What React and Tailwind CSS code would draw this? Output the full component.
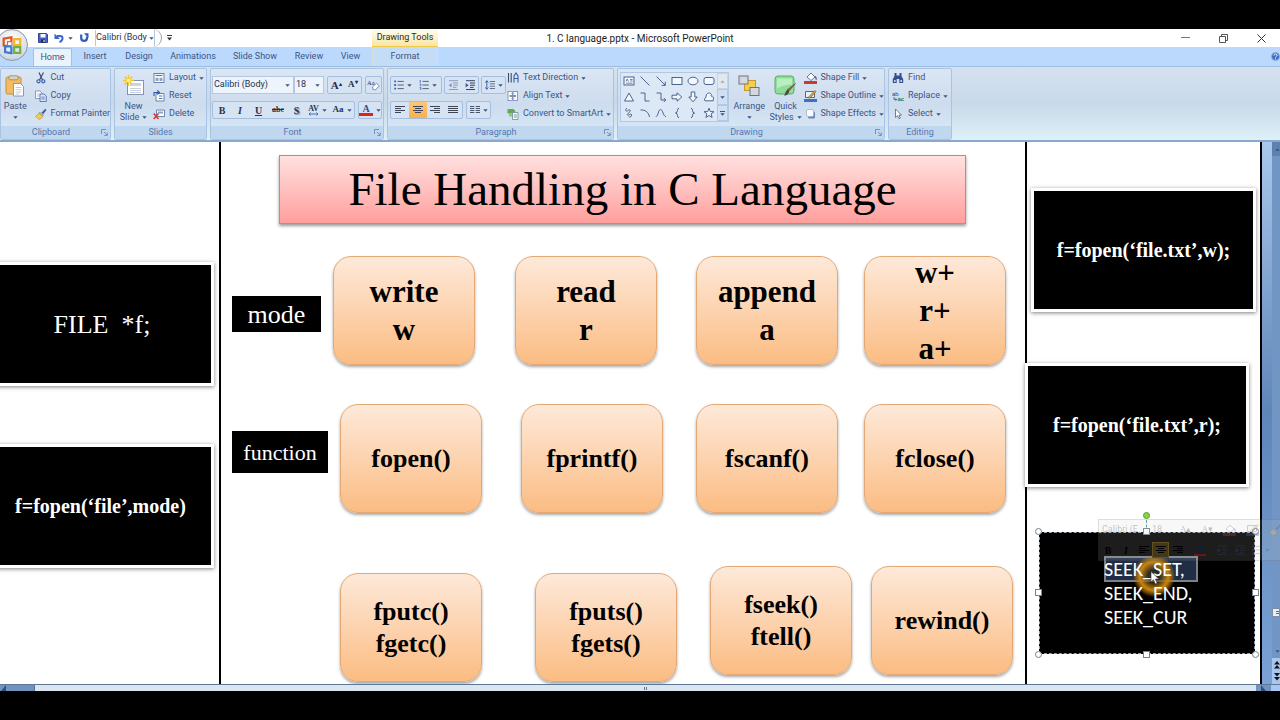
import React from "react";

const INK = "#3b5584";

function Caret({ className = "" }) {
  return (
    <svg className={`h-[3px] w-[5px] shrink-0 ${className}`} viewBox="0 0 5 3" aria-hidden="true">
      <path d="M0.3 0.3h4.4L2.5 2.8z" fill={INK} />
    </svg>
  );
}

function Svg({ w = 12, h = 12, className = "", children }) {
  return (
    <svg width={w} height={h} viewBox={`0 0 ${w} ${h}`} className={`shrink-0 ${className}`} fill="none" aria-hidden="true">
      {children}
    </svg>
  );
}

/* ---------- icons ---------- */

const Save = () => (
  <Svg w={10} h={10}>
    <path d="M0.5 0.5h8l1 1v8h-9z" fill="#4d5fc0" stroke="#35449a" />
    <path d="M2.5 1h5v3.5h-5z" fill="#f4f6ff" />
    <path d="M3 6.5h4v3h-4z" fill="#20295e" />
    <path d="M5.5 7h1v2h-1z" fill="#fff" />
  </Svg>
);
const Undo = () => (
  <Svg w={10} h={10}>
    <path d="M3 3h3.2q2.300 0 2.300 2.300Q8.500 8 5.500 9" stroke="#3e63cf" strokeWidth="2" />
    <path d="M0.500 0.500v5.500H6z" fill="#3e63cf" />
  </Svg>
);
const Redo = () => (
  <Svg w={10} h={10}>
    <path d="M2.200 1.500v3.500a2.900 2.900 0 0 0 5.800 0V3.500" stroke="#2e5cc0" strokeWidth="2.200" />
    <path d="M4.800 0.300h4.700v4.700z" fill="#2e5cc0" />
  </Svg>
);
const PasteIcon = () => (
  <Svg w={20} h={22}>
    <rect x="1" y="2" width="15" height="17" rx="1.5" fill="#f2bd62" stroke="#c98c35" />
    <rect x="4" y="0.8" width="9" height="4" rx="1" fill="#d8d3c4" stroke="#8c8672" strokeWidth="0.8" />
    <path d="M8.5 8.5h7l3 3v9.5h-10z" fill="#fff" stroke="#7f8fb3" strokeWidth="0.9" />
    <path d="M10.5 12.5h6M10.5 14.7h6M10.5 17h6M10.5 19h4" stroke="#a9b8d6" strokeWidth="0.7" />
  </Svg>
);
const CutIcon = () => (
  <Svg>
    <path d="M4 0.5 7.5 8M8.5 0.5 4.5 8" stroke="#3b4a7a" strokeWidth="1.2" />
    <circle cx="3.5" cy="9.3" r="1.6" stroke="#3659a8" strokeWidth="1.1" />
    <circle cx="8.3" cy="9.3" r="1.6" stroke="#3659a8" strokeWidth="1.1" />
  </Svg>
);
const CopyIcon = () => (
  <Svg>
    <path d="M0.5 1h4.5l2 2v5.5h-6.5z" fill="#fff" stroke="#6b86bd" strokeWidth="0.8" />
    <path d="M1.8 4h3M1.8 6h3" stroke="#86a0d0" strokeWidth="0.7" />
    <path d="M5 4h4l2.3 2v5.5H5z" fill="#dbe6fa" stroke="#46639f" strokeWidth="0.8" />
    <path d="M6.3 7.2h3.5M6.3 9h3.5" stroke="#4d6db0" strokeWidth="0.8" />
  </Svg>
);
const PainterIcon = () => (
  <Svg>
    <path d="M6.5 4.8 10.2 0.8l1.3 1.1-3.4 4.3z" fill="#4058a6" />
    <path d="M4.7 4 8.6 7 7.7 8.4 3.8 5.3z" fill="#b9b9b9" stroke="#777" strokeWidth="0.4" />
    <path d="M3.8 5.3 7.7 8.4C7 10.2 5.5 11.3 3.6 11.3 2.7 9.8 1.3 9 0.3 8.6z" fill="#f1cc56" stroke="#a88a2c" strokeWidth="0.5" />
  </Svg>
);
const NewSlideIcon = () => (
  <Svg w={22} h={22}>
    <rect x="4.5" y="5.5" width="16" height="14" fill="#fff" stroke="#8492ad" />
    <rect x="7" y="8" width="11" height="3" fill="#c8d3e6" />
    <path d="M7 13.5h11M7 15.5h11M7 17.5h11" stroke="#b8c3d6" strokeWidth="0.8" />
    <path d="M5.5 0v11M0 5.5h11M1.6 1.6l7.8 7.8M9.4 1.6 1.6 9.4" stroke="#f3c928" strokeWidth="1.4" />
    <circle cx="5.5" cy="5.5" r="1.8" fill="#fff3a0" />
  </Svg>
);
const LayoutIcon = () => (
  <Svg>
    <rect x="1" y="1.5" width="10" height="9" fill="#fff" stroke="#5f779f" strokeWidth="0.9" />
    <path d="M2.5 3.5h7" stroke="#5f779f" strokeWidth="1.2" />
    <path d="M2.5 5.7h3v3.3h-3zM6.5 5.7h3v3.3h-3z" fill="#8ba1c6" />
  </Svg>
);
const ResetIcon = () => (
  <Svg>
    <path d="M3 3.5h8v7.5H3z" fill="#fff" stroke="#5f779f" strokeWidth="0.9" />
    <path d="M6 6h3.5M6 8.5h3.5" stroke="#5f779f" />
    <path d="M1 6V2.5h5M4.3 0.5 6.5 2.5 4.3 4.5" stroke="#2f59b5" strokeWidth="1.1" />
  </Svg>
);
const DeleteIcon = () => (
  <Svg>
    <path d="M3.5 2h8v6.5h-8z" fill="#fff" stroke="#5f779f" strokeWidth="0.9" />
    <path d="M5 3.5h5v2H5z" fill="#8ba1c6" />
    <path d="M0.7 5.5 5.5 11M5.5 5.5 0.7 11" stroke="#dd3b2a" strokeWidth="1.6" />
  </Svg>
);
const ClearIcon = () => (
  <Svg w={13}>
    <text x="0" y="6" fontSize="6.5" fontFamily="Liberation Serif, serif" fill="#222c50">Aa</text>
    <path d="M5.5 8 9.5 4.3l2.8 2.5-4 4.2-2.3-.6z" fill="#fff" stroke="#6378a8" strokeWidth="0.8" />
  </Svg>
);
const ListIcon = ({ numbered }) => (
  <Svg w={10} h={10}>
    {numbered ? (
      <path d="M1.2 0v2.6M0.6 4h1.2v2.4M0.6 7.6h1.2V10" stroke="#3f63b5" strokeWidth="0.9" />
    ) : (
      <path d="M0.2 0.5h1.8v1.8H0.2zM0.2 4.1h1.8v1.8H0.2zM0.2 7.7h1.8v1.8H0.2z" fill="#3f63b5" />
    )}
    <path d="M3.5 1.4h6.3M3.5 5h6.3M3.5 8.6h6.3" stroke="#59647c" strokeWidth="1" />
  </Svg>
);
const IndentIcon = ({ out }) => (
  <Svg w={10} h={10}>
    <path d="M1 0.7h9M5 3h5M5 5.2h5M5 7.4h3.5M1 9.5h9" stroke={out ? "#8c9cbb" : "#39445f"} />
    <path d={out ? "M3.6 3v4.4L0.6 5.2z" : "M0.6 3v4.4l3-2.2z"} fill={out ? "#7f97c7" : "#2f55ad"} />
  </Svg>
);
const SpacingIcon = () => (
  <Svg w={10} h={10}>
    <path d="M1.8 1v8M0.3 2.6 1.8 0.6l1.5 2M0.3 7.4l1.5 2 1.5-2" stroke="#2f55ad" strokeWidth="0.9" />
    <path d="M4.8 1.5H10M4.8 3.8H10M4.8 6.2H10M4.8 8.5H10" stroke="#59647c" strokeWidth="0.9" />
  </Svg>
);
const ALIGN = {
  left: "M0 1.500h10M0 3.500h6M0 5.500h10M0 7.500h6",
  center: "M0 1.500h10M2 3.500h6M0 5.500h10M2 7.500h6",
  right: "M0 1.500h10M4 3.500h6M0 5.500h10M4 7.500h6",
  justify: "M0 1.500h10M0 3.500h10M0 5.500h10M0 7.500h10",
};
const AlignIcon = ({ kind, color = "#3d4556" }) => (
  <Svg w={10} h={10}>
    <path d={ALIGN[kind]} stroke={color} strokeWidth="1" />
  </Svg>
);
const ColumnsIcon = () => (
  <Svg w={10} h={10}>
    <path d="M0 1.5h4.3M0 3.5h4.3M0 5.5h4.3M0 7.5h4.3M5.7 1.5H10M5.7 3.5H10M5.7 5.5H10M5.7 7.5H10" stroke="#4a556e" />
  </Svg>
);
const TextDirIcon = () => (
  <Svg>
    <path d="M1.5 1v9.5M4.2 1v9.5" stroke="#3d4a68" strokeWidth="1.1" />
    <path d="M7 10.5V4l2-3 2 3v6.5M7 6.5h4" stroke="#3d5aa3" strokeWidth="1.1" />
  </Svg>
);
const AlignTextIcon = () => (
  <Svg>
    <rect x="1" y="1.5" width="9.5" height="9" fill="#fff" stroke="#7f91b5" strokeWidth="0.9" />
    <path d="M2.5 6h6.5" stroke="#39445f" strokeWidth="1.2" />
    <path d="M5.8 2v2.2M5.8 10V7.8M4.6 3.4l1.2 1.2L7 3.4M4.6 8.6l1.2-1.2L7 8.6" stroke="#2f55ad" strokeWidth="0.8" />
  </Svg>
);
const SmartArtIcon = () => (
  <Svg>
    <path d="M0.5 1h6l2 2.2-2 2.3h-6z" fill="#5cab53" />
    <path d="M2 5.5h4.5v3H2z" fill="#8cc983" />
    <path d="M5.5 4.5h5.5v7H5.5z" fill="#f7fbff" stroke="#6b86a8" strokeWidth="0.8" />
    <path d="M6.8 7h3M6.8 9h3" stroke="#5cab53" />
  </Svg>
);
const ArrangeIcon = () => (
  <Svg w={22} h={22}>
    <rect x="6.5" y="5.5" width="11" height="10" fill="#f6cf4a" stroke="#c29a25" />
    <rect x="1" y="1" width="9" height="8" fill="#d5d9df" stroke="#6d7481" />
    <rect x="12" y="12.5" width="9" height="8" fill="#d5d9df" stroke="#6d7481" />
  </Svg>
);
const QuickIcon = () => (
  <Svg w={22} h={22}>
    <rect x="1" y="1" width="19" height="18" rx="3" fill="#8fdc9b" stroke="#56ae68" />
    <path d="M3 3.5h15v6c-5 0-9 1-15 4z" fill="#b9efc0" />
    <path d="M21.5 8.5 15 16l-1.6-1.4z" fill="#9c6b3b" stroke="#5e4022" strokeWidth="0.6" />
    <path d="M13.4 14.4 15.2 16.2c0 2.2-2.3 4.5-5.2 4.3 1.4-1.4 1-4 3.4-6.1z" fill="#4b4b4b" />
  </Svg>
);
const FillIcon = () => (
  <Svg w={13} h={12}>
    <path d="M3 5 7 1l4 4-4 3.5z" fill="#fff" stroke="#56678c" strokeWidth="0.9" />
    <path d="M11 4.5c1.2 1.2 1.4 2.2 1 3.2" stroke="#3659a8" strokeWidth="1.2" />
    <path d="M0 9h13v3H0z" fill="#c93b32" />
  </Svg>
);
const OutlineIcon = () => (
  <Svg w={13} h={12}>
    <path d="M1.5 1.5h9v6h-9z" fill="#eaf0fb" stroke="#56678c" />
    <path d="m4 7.5 6.8-7 1.4 1.2-6.5 6.6z" fill="#e0a33c" stroke="#5e4a22" strokeWidth="0.5" />
    <path d="M0 9h13v3H0z" fill="#3f6fc4" />
  </Svg>
);
const EffectsIcon = () => (
  <Svg w={13} h={12}>
    <rect x="4" y="3.5" width="7" height="7" rx="1.5" fill="#6d84b5" />
    <rect x="2.5" y="1.5" width="7" height="7" rx="1.5" fill="#fafcff" stroke="#9fb1d2" strokeWidth="0.8" />
  </Svg>
);
const FindIcon = () => (
  <Svg>
    <path d="M2.5 1h2v2.5h3V1h2v3l1.7 3.2V11H7.3V7h-2.6v4H0.8V7.2L2.5 4z" fill="#34508f" />
    <path d="M2 8h1.6v2H2zM8.4 8H10v2H8.4z" fill="#c6d6f2" />
  </Svg>
);
const ReplaceIcon = () => (
  <Svg>
    <text x="0" y="5.5" fontSize="6" fontFamily="Liberation Sans, sans-serif" fill="#333f60">ab</text>
    <path d="M2 7v2.5h2.5M3.4 8.2 4.8 9.5 3.4 10.8" stroke="#2f55ad" strokeWidth="0.8" />
    <text x="5.5" y="11.3" fontSize="6" fontWeight="bold" fontFamily="Liberation Sans, sans-serif" fill="#2d7b35">ac</text>
  </Svg>
);
const SelectIcon = () => (
  <Svg>
    <path d="M3.5 1v8.500l2-1.800 1.400 3 1.400-.6-1.400-3h2.600z" fill="#fff" stroke="#4d5f86" strokeWidth="0.8" />
  </Svg>
);
const Pointer = () => (
  <svg className="absolute left-[1150px] top-[429px] h-[14px] w-[10px]" viewBox="0 0 10 14" aria-hidden="true">
    <path d="M1 0.5v10.6l2.5-2.3 1.8 4.2 1.9-.8-1.8-4.1h3.5z" fill="#fff" stroke="#333" strokeWidth="0.6" />
  </svg>
);

const SHAPES = [
  ["Text Box", <><rect x="1" y="2" width="10" height="8" fill="#f4f7fd" /><path d="M3 6.5 4.2 4l1.2 2.5M7 4.5h2.6M7 6h2.6M3 8.2h6.6" strokeWidth="0.7" /></>],
  ["Line", <path d="m1.5 1.5 9 9" />],
  ["Arrow", <path d="m1.5 1.5 8.5 8.5M10.3 6.8v3.6H6.7" />],
  ["Rectangle", <rect x="1" y="2.5" width="10" height="7" fill="#f4f7fd" />],
  ["Oval", <ellipse cx="6" cy="6" rx="5" ry="3.8" fill="#f4f7fd" />],
  ["Rounded Rectangle", <rect x="1" y="2.5" width="10" height="7" rx="2" fill="#f4f7fd" />],
  ["Triangle", <path d="M6 2 10.5 10h-9z" fill="#f4f7fd" />],
  ["Elbow Connector", <path d="M1.5 2h4.5v8h4.5" />],
  ["Elbow Arrow", <path d="M1.5 2H6v7h4.5M8.8 7l2 2-2 2" />],
  ["Right Arrow", <path d="M1 4.2h5V1.8L10.8 6 6 10.2V7.8H1z" fill="#f4f7fd" />],
  ["Down Arrow", <path d="M4.2 1h3.6v5h2.4L6 10.8 1.8 6h2.4z" fill="#f4f7fd" />],
  ["Freeform", <path d="M3.5 3.5c2-2.4 4-1.5 5 0-1 1.2-.5 2 1 1.8 1.3.6 1 2.5.7 4.5H2c-1-1-.5-2.6.7-3z" fill="#f4f7fd" />],
  ["Scribble", <path d="M4 1C1.500 3 3 5 5 3.500S8 3 6.500 5 3 8 5 8s3.500-2 3.500 0S6 11 6 9.500" />],
  ["Arc", <path d="M1.5 3C6 2.5 9.5 5 10.5 10" />],
  ["Curve", <path d="M0.8 9.5C3.5 9.5 3 2.5 5.5 2.5S8 9.5 11 9.5" />],
  ["Left Brace", <path d="M8 1.2C5.5 1.2 7.5 6 4.5 6c3 0 1 4.800 3.500 4.800" />],
  ["Right Brace", <path d="M4 1.2C6.5 1.2 4.5 6 7.5 6c-3 0-1 4.800-3.500 4.800" />],
  ["Star", <path d="m6 1.2 1.3 3.4 3.7.1-2.9 2.2 1 3.6L6 8.500l-3.100 2 1-3.600L1 4.700l3.700-.1z" fill="#f4f7fd" />],
];

/* ---------- ribbon parts ---------- */

function Group({ title, width, launcher, children }) {
  return (
    <section
      aria-label={title}
      className={`flex h-[72px] shrink-0 flex-col rounded-[2px] border border-[#a9c4e2] bg-linear-to-b from-[#dbe6f4] via-[#cddcee] to-[#dcebf8] ${width}`}
    >
      <div className="flex min-h-0 flex-1">{children}</div>
      <div className="flex h-[13px] items-center bg-[#bfd8f0] text-[#5577ad]">
        <h2 className="flex-1 text-center">{title}</h2>
        {launcher && (
          <button type="button" aria-label={`${title} options`} className="mr-[2px]">
            <Svg w={7} h={7}>
              <path d="M0.5 5V0.5H5M3 3l3 3M6.3 3.5v3H3.3" stroke="#6c8ab8" strokeWidth="0.9" />
            </Svg>
          </button>
        )}
      </div>
    </section>
  );
}

function Item({ icon, label, caret }) {
  return (
    <button type="button" className="flex h-[18px] items-center gap-[3px] whitespace-nowrap">
      <span className="flex w-[14px] justify-center">{icon}</span>
      {label}
      {caret && <Caret />}
    </button>
  );
}

function Big({ icon, lines, width, caretBelow }) {
  return (
    <button type="button" className={`flex flex-col items-center pt-[6px] leading-[11px] ${width}`}>
      <span className="flex h-[26px]">{icon}</span>
      <span>{lines[0]}</span>
      {caretBelow ? (
        <Caret className="mt-1" />
      ) : (
        <span className="flex items-center gap-[3px]">
          {lines[1]}
          <Caret />
        </span>
      )}
    </button>
  );
}

function Box({ children, className = "" }) {
  return <div className={`flex h-[18px] items-center rounded-[2px] border border-[#a3bedf] bg-[#d5e3f3] ${className}`}>{children}</div>;
}

function Tool({ label, width, caret, active, children }) {
  return (
    <button
      type="button"
      aria-label={label}
      className={`flex h-full items-center justify-center gap-[3px] ${width} ${active ? "bg-linear-to-b from-[#fcc67a] to-[#fbb04a]" : ""}`}
    >
      {children}
      {caret && <Caret />}
    </button>
  );
}

function Combo({ label, value, width }) {
  return (
    <div className={`flex h-[18px] items-center border border-[#b3c8e4] bg-[#eef4fc] pr-[3px] ${width}`}>
      <select aria-label={label} className="h-full min-w-0 flex-1 appearance-none bg-transparent pl-px text-[9px] text-[#27324c] outline-none">
        <option>{value}</option>
      </select>
      <Caret />
    </div>
  );
}

function FontColor() {
  return (
    <span className="flex w-[14px] flex-col items-center border-b-[3px] border-[#e5201b] font-['Liberation_Serif',serif] text-[10px] font-bold leading-[9px] text-[#34508f]">
      A
    </span>
  );
}

/* ---------- slide parts ---------- */

function Card({ lines, place, text }) {
  return (
    <div
      className={`absolute flex h-[109px] w-[142px] flex-col items-center justify-center rounded-[18px] border border-[#e3a873] bg-linear-to-b from-[#fde9d9] to-[#fbbc82] font-bold shadow-[0_2px_3px_rgba(0,0,0,0.35)] ${place} ${text}`}
    >
      {lines.map((line) => (
        <span key={line}>{line}</span>
      ))}
    </div>
  );
}

function Code({ place, className = "text-[20px] font-bold", children }) {
  return (
    <div
      className={`absolute flex h-[124px] items-center justify-center whitespace-pre border-[3px] border-white bg-black text-white shadow-[0_1px_4px_rgba(0,0,0,0.5)] ${place} ${className}`}
    >
      {children}
    </div>
  );
}

const HANDLES = [
  "left-[-4px] top-[-4px] rounded-full",
  "left-[104px] top-[-4px]",
  "right-[-4px] top-[-4px] rounded-full",
  "left-[-4px] top-[57px]",
  "right-[-4px] top-[57px]",
  "bottom-[-4px] left-[-4px] rounded-full",
  "bottom-[-4px] left-[104px]",
  "bottom-[-4px] right-[-4px] rounded-full",
];

const CARDS = [
  [["write", "w"], "left-[333px] top-[114px]", "text-[31px] leading-[38px]"],
  [["read", "r"], "left-[515px] top-[114px]", "text-[31px] leading-[38px]"],
  [["append", "a"], "left-[696px] top-[114px]", "text-[31px] leading-[38px]"],
  [["w+", "r+", "a+"], "left-[864px] top-[114px]", "text-[31px] leading-[38px]"],
  [["fopen()"], "left-[340px] top-[262px]", "text-[26px] leading-[32px]"],
  [["fprintf()"], "left-[521px] top-[262px]", "text-[26px] leading-[32px]"],
  [["fscanf()"], "left-[696px] top-[262px]", "text-[26px] leading-[32px]"],
  [["fclose()"], "left-[864px] top-[262px]", "text-[26px] leading-[32px]"],
  [["fputc()", "fgetc()"], "left-[340px] top-[431px]", "text-[26px] leading-[32px]"],
  [["fputs()", "fgets()"], "left-[535px] top-[431px]", "text-[26px] leading-[32px]"],
  [["fseek()", "ftell()"], "left-[710px] top-[424px]", "text-[26px] leading-[32px]"],
  [["rewind()"], "left-[871px] top-[424px]", "text-[26px] leading-[32px]"],
];

const TABS = [
  ["Home", "w-[39px]"],
  ["Insert", "w-[46px]"],
  ["Design", "w-[42px]"],
  ["Animations", "w-[66px]"],
  ["Slide Show", "w-[58px]"],
  ["Review", "w-[50px]"],
  ["View", "w-[33px]"],
];

function TitleBar() {
  return (
    <header className="flex h-[18px] items-center bg-white">
      <div className="flex h-full flex-1 items-center">
        <div className="ml-[28px] flex h-full w-[134px] items-center gap-[6px] rounded-r-full border-r border-[#8f9bb0] pl-[10px] pr-[6px]">
          <button type="button" aria-label="Save"><Save /></button>
          <button type="button" aria-label="Undo" className="flex items-center gap-1"><Undo /><Caret /></button>
          <button type="button" aria-label="Redo"><Redo /></button>
          <div className="flex h-[16px] flex-1 items-center border-x border-[#b3c8e4]">
            <select aria-label="Font" className="w-[53px] appearance-none bg-transparent text-[9px] text-[#27324c] outline-none">
              <option>Calibri (Body</option>
            </select>
            <Caret />
          </div>
        </div>
        <button type="button" aria-label="Customize toolbar" className="ml-[5px]">
          <Svg w={5} h={6}><path d="M0 0.5h5" stroke="#333" /><path d="M0 2.5h5L2.5 5.5z" fill="#333" /></Svg>
        </button>
        <div className="ml-[200px] flex h-full w-[66px] items-center justify-center whitespace-nowrap border-b border-[#f0c84c] bg-linear-to-b from-[#fefcf0] to-[#fbe7a0] text-[9px] text-[#2b2b2b]">
          Drawing Tools
        </div>
      </div>
      <h1 className="whitespace-nowrap text-[10px] text-[#222]">1. C language.pptx - Microsoft PowerPoint</h1>
      <div className="flex flex-1 justify-end">
        <button type="button" aria-label="Minimize" className="flex w-[38px] justify-center"><Svg w={9} h={9}><path d="M0 3.5h9" stroke="#777" /></Svg></button>
        <button type="button" aria-label="Restore" className="flex w-[38px] justify-center"><Svg w={9} h={9}><path d="M0.5 2.5h6v6h-6zM2.5 2.5v-2h6v6h-2" stroke="#444" strokeWidth="0.9" /></Svg></button>
        <button type="button" aria-label="Close" className="flex w-[38px] justify-center"><Svg w={9} h={9}><path d="m0.5 0.5 8 8M8.5 0.5l-8 8" stroke="#333" /></Svg></button>
      </div>
    </header>
  );
}

function Ribbon() {
  return (
    <div className="flex h-[76px] items-start gap-[3px] overflow-hidden border-b-2 border-t border-b-[#86a9cd] border-t-[#9dbddf] bg-linear-to-b from-[#d5e1f0] via-[#c8d9ea] to-[#def0f8] pt-px text-[9px] text-[#3b5584]">
      <Group title="Clipboard" width="w-[111px]" launcher>
        <Big icon={<PasteIcon />} lines={["Paste"]} width="w-[32px]" caretBelow />
        <div className="flex flex-col pl-1">
          <Item icon={<CutIcon />} label="Cut" />
          <Item icon={<CopyIcon />} label="Copy" />
          <Item icon={<PainterIcon />} label="Format Painter" />
        </div>
      </Group>
      <Group title="Slides" width="w-[93px]">
        <Big icon={<NewSlideIcon />} lines={["New", "Slide"]} width="w-[37px]" />
        <div className="flex flex-col">
          <Item icon={<LayoutIcon />} label="Layout" caret />
          <Item icon={<ResetIcon />} label="Reset" />
          <Item icon={<DeleteIcon />} label="Delete" />
        </div>
      </Group>
      <Group title="Font" width="w-[174px]" launcher>
        <div className="flex flex-1 flex-col gap-[7px] px-px pt-[7px]">
          <div className="flex gap-[3px]">
            <div className="flex">
              <Combo label="Font name" value="Calibri (Body)" width="w-[82px]" />
              <Combo label="Font size" value="18" width="w-[30px]" />
            </div>
            <Box className="w-[35px] font-['Liberation_Serif',serif] font-bold text-[#222c50]">
              <Tool label="Grow font" width="flex-1"><span className="text-[11px]">A<sup className="text-[6px]">▴</sup></span></Tool>
              <Tool label="Shrink font" width="flex-1"><span className="text-[9px]">A<sup className="text-[6px]">▾</sup></span></Tool>
            </Box>
            <Box className="flex-1"><Tool label="Clear formatting" width="w-full"><ClearIcon /></Tool></Box>
          </div>
          <div className="flex gap-[3px]">
            <Box className="w-[143px] font-['Liberation_Serif',serif] text-[10px] font-bold text-[#2a3350]">
              <Tool label="Bold" width="w-[18px]">B</Tool>
              <Tool label="Italic" width="w-[18px]"><i>I</i></Tool>
              <Tool label="Underline" width="w-[19px]"><u>U</u></Tool>
              <Tool label="Strikethrough" width="w-[20px]"><s className="text-[8px]">abc</s></Tool>
              <Tool label="Shadow" width="w-[17px]"><span className="[text-shadow:1px_1px_1px_#777]">S</span></Tool>
              <Tool label="Character spacing" width="w-[25px]" caret>
                <span className="flex flex-col items-center text-[8px] leading-[7px]">
                  AV
                  <Svg w={11} h={4}><path d="M1 2h9M2.5 0.5 1 2l1.5 1.5M8.5 0.5 10 2 8.5 3.5" stroke="#2f62c0" strokeWidth="0.9" /></Svg>
                </span>
              </Tool>
              <Tool label="Change case" width="w-[24px]" caret><span className="text-[9px]">Aa</span></Tool>
            </Box>
            <Box className="flex-1"><Tool label="Font color" width="w-full" caret><FontColor /></Tool></Box>
          </div>
        </div>
      </Group>
      <Group title="Paragraph" width="w-[227px]" launcher>
        <div className="flex w-[118px] flex-col gap-[7px] pl-[2px] pt-[7px]">
          <div className="flex gap-[2px]">
            <Box className="w-[52px]">
              <Tool label="Bullets" width="flex-1" caret><ListIcon /></Tool>
              <Tool label="Numbering" width="flex-1" caret><ListIcon numbered /></Tool>
            </Box>
            <Box className="w-[36px]">
              <Tool label="Decrease indent" width="flex-1"><IndentIcon out /></Tool>
              <Tool label="Increase indent" width="flex-1"><IndentIcon /></Tool>
            </Box>
            <Box className="w-[25px]"><Tool label="Line spacing" width="w-full" caret><SpacingIcon /></Tool></Box>
          </div>
          <div className="flex gap-[3px]">
            <Box className="w-[73px]">
              <Tool label="Align left" width="flex-1"><AlignIcon kind="left" /></Tool>
              <Tool label="Center" width="flex-1" active><AlignIcon kind="center" /></Tool>
              <Tool label="Align right" width="flex-1"><AlignIcon kind="right" /></Tool>
              <Tool label="Justify" width="flex-1"><AlignIcon kind="justify" /></Tool>
            </Box>
            <Box className="w-[25px]"><Tool label="Columns" width="w-full" caret><ColumnsIcon /></Tool></Box>
          </div>
        </div>
        <div className="flex flex-col">
          <Item icon={<TextDirIcon />} label="Text Direction" caret />
          <Item icon={<AlignTextIcon />} label="Align Text" caret />
          <Item icon={<SmartArtIcon />} label="Convert to SmartArt" caret />
        </div>
      </Group>
      <Group title="Drawing" width="w-[268px]" launcher>
        <div className="ml-[2px] mt-[3px] flex h-[50px] w-[109px] shrink-0 border border-[#b3c8e4] bg-[#dce8f5]">
          <div className="grid flex-1 grid-cols-6 grid-rows-3">
            {SHAPES.map(([name, drawing]) => (
              <button key={name} type="button" aria-label={name} className="flex items-center justify-center">
                <svg className="h-[12px] w-[12px]" viewBox="0 0 12 12" fill="none" stroke={INK} strokeWidth="0.9">{drawing}</svg>
              </button>
            ))}
          </div>
          <div className="flex w-[11px] flex-col">
            <button type="button" aria-label="Scroll shapes up" className="flex flex-1 items-center justify-center border border-[#c9d3e2] bg-[#e3e7ee]"><Caret className="rotate-180 opacity-40" /></button>
            <button type="button" aria-label="Scroll shapes down" className="flex flex-1 items-center justify-center border border-[#b3c8e4] bg-[#cfe0f4]"><Caret /></button>
            <button type="button" aria-label="More shapes" className="flex flex-1 flex-col items-center justify-center gap-px border border-[#b3c8e4] bg-[#cfe0f4]"><span className="h-px w-[5px] bg-[#3b5584]" /><Caret /></button>
          </div>
        </div>
        <Big icon={<ArrangeIcon />} lines={["Arrange"]} width="w-[42px]" caretBelow />
        <Big icon={<QuickIcon />} lines={["Quick", "Styles"]} width="w-[32px]" />
        <div className="flex flex-col pl-[2px]">
          <Item icon={<FillIcon />} label="Shape Fill" caret />
          <Item icon={<OutlineIcon />} label="Shape Outline" caret />
          <Item icon={<EffectsIcon />} label="Shape Effects" caret />
        </div>
      </Group>
      <Group title="Editing" width="w-[64px]">
        <div className="flex flex-col pl-[2px]">
          <Item icon={<FindIcon />} label="Find" />
          <Item icon={<ReplaceIcon />} label="Replace" caret />
          <Item icon={<SelectIcon />} label="Select" caret />
        </div>
      </Group>
    </div>
  );
}

function MiniToolbar() {
  return (
    <div className="absolute left-[1098px] top-[377px] flex h-[42px] w-[190px] flex-col border border-black/10 bg-[#cccccc]/14 text-[9px]">
      <div className="flex h-[20px] items-center gap-[10px] pl-[3px] text-black/25">
        <span className="w-[40px] whitespace-nowrap">Calibri (E</span>
        <span className="w-[18px]">18</span>
        <span className="font-['Liberation_Serif',serif]">A▴</span>
        <span className="font-['Liberation_Serif',serif]">A▾</span>
        <span className="flex opacity-30"><FillIcon /></span>
        <span className="flex opacity-30"><OutlineIcon /></span>
        <span className="flex opacity-30"><PainterIcon /></span>
      </div>
      <div className="flex h-[20px] items-center font-['Liberation_Serif',serif] text-[10px] font-bold text-black">
        <Tool label="Bold selection" width="w-[18px]">B</Tool>
        <Tool label="Italicize selection" width="w-[18px]"><i>I</i></Tool>
        <Tool label="Align selection left" width="w-[17px]"><AlignIcon kind="left" color="#000" /></Tool>
        <span className="flex h-[16px] w-[17px] items-center justify-center border border-[#63501f] bg-[#45381a]"><AlignIcon kind="center" color="#000" /></span>
        <Tool label="Align selection right" width="w-[18px]"><AlignIcon kind="right" color="#000" /></Tool>
        <Tool label="Color selection" width="w-[26px]"><span className="w-[12px] border-b-2 border-[#6d1512] leading-[9px] text-[#10203f]">A</span></Tool>
        <span className="flex opacity-30">
          <Tool label="Outdent selection" width="w-[18px]"><IndentIcon /></Tool>
          <Tool label="Indent selection" width="w-[18px]"><IndentIcon /></Tool>
          <Tool label="Bullet selection" width="w-[24px]" caret><ListIcon /></Tool>
        </span>
      </div>
    </div>
  );
}

function Slide() {
  return (
    <main className="relative min-h-[542px] flex-1 overflow-hidden border-r-2 border-black bg-white font-['Liberation_Serif',serif] text-black">
      <div className="absolute inset-y-0 left-[219px] w-[2px] bg-black" />
      <div className="absolute inset-y-0 left-[1025px] w-[2px] bg-black" />

      <h2 className="absolute left-[279px] top-[13px] flex h-[69px] w-[687px] items-center justify-center border border-[#c98584] bg-linear-to-b from-[#ffe1e0] to-[#ff9f9d] text-[47px] shadow-[0_2px_3px_rgba(0,0,0,0.4)]">
        File Handling in C Language
      </h2>

      <div className="absolute left-[232px] top-[154px] flex h-[36px] w-[89px] items-center justify-center bg-black text-[26px] text-white">mode</div>
      <div className="absolute left-[232px] top-[289px] flex h-[42px] w-[96px] items-center justify-center bg-black text-[22px] text-white">function</div>

      {CARDS.map(([lines, place, text]) => (
        <Card key={lines[0]} lines={lines} place={place} text={text} />
      ))}

      <Code place="left-[-10px] top-[120px] w-[224px]" className="text-[26px]">{"FILE  *f;"}</Code>
      <Code place="left-[-13px] top-[302px] w-[227px]">f=fopen(‘file’,mode)</Code>
      <Code place="left-[1031px] top-[46px] w-[225px]">f=fopen(‘file.txt’,w);</Code>
      <Code place="left-[1025px] top-[221px] w-[224px]">f=fopen(‘file.txt’,r);</Code>

      <div className="absolute left-[1039px] top-[390px] h-[122px] w-[216px] border border-dashed border-[#9aa3ad] bg-black" />
      <div className="absolute left-[1146px] top-[378px] h-[12px] border-l border-dashed border-[#5d8f8f]" />
      <div className="absolute left-[1143px] top-[370px] h-[7px] w-[7px] rounded-full border border-[#5a9a2c] bg-[#86d63d]" />
      <div className="absolute left-[1104px] top-[414px] h-[26px] w-[94px] border-2 border-[#7c8089] bg-[#1f2d46]" />
      <div className="absolute left-[1133px] top-[413px] h-[42px] w-[42px] rounded-full bg-[radial-gradient(circle,rgba(60,45,10,0.5)_20%,#c8860f_48%,rgba(180,115,5,0.7)_58%,transparent_72%)]" />
      <p className="absolute left-[1104px] top-[415px] whitespace-pre font-[Carlito,'Open_Sans',sans-serif] text-[20px] leading-[24px] text-white">
        {"SEEK_SET,\nSEEK_END,\nSEEK_CUR"}
      </p>
      <Pointer />
      <div className="pointer-events-none absolute left-[1039px] top-[390px] h-[122px] w-[216px]">
        {HANDLES.map((h) => (
          <span key={h} className={`absolute h-[7px] w-[7px] border border-[#6f8492] bg-white ${h}`} />
        ))}
      </div>
    </main>
  );
}

function VerticalScroll() {
  return (
    <div className="flex w-[8px] flex-col items-end bg-[#7296c4]">
      <button type="button" aria-label="Scroll up" className="flex h-[14px] w-full items-center justify-end bg-[#5f81b0]"><Caret className="rotate-180" /></button>
      <div className="flex-1" />
      <div className="flex h-[9px] w-full flex-col justify-center gap-px border border-[#7c8ea8] bg-[#e8eef6] pl-[3px]">
        <span className="h-px bg-[#667]" />
        <span className="h-px bg-[#667]" />
      </div>
      <div className="h-[28px]" />
      <button type="button" aria-label="Scroll down" className="flex h-[13px] w-full items-center justify-end"><Caret /></button>
      <div className="flex w-full flex-col items-end gap-[4px] bg-[#a9c6ef] pb-[3px] pt-[3px]">
        <button type="button" aria-label="Previous slide" className="flex"><Svg w={6} h={8}><path d="M3 0 6 3.5H0zM3 4l3 3.5H0z" fill="#111" /></Svg></button>
        <button type="button" aria-label="Next slide" className="flex"><Svg w={6} h={8}><path d="M0 0h6L3 3.5zM0 4h6L3 7.5z" fill="#111" /></Svg></button>
      </div>
    </div>
  );
}

export default function App() {
  return (
    <div className="flex min-h-screen w-full flex-col bg-black py-[29px] font-[Roboto,'Open_Sans',sans-serif]">
      <div className="relative">
        <TitleBar />
        <nav aria-label="Ribbon tabs" className="flex h-[19px] items-end bg-[#bbd9fd] pl-[33px] text-[9px] text-[#3b5584]">
          {TABS.map(([name, width]) => (
            <button
              key={name}
              type="button"
              className={`h-[18px] whitespace-nowrap text-center ${width} ${name === "Home" ? "rounded-t-[2px] border border-b-0 border-[#a0c0e4] bg-[#eaf2fb]" : ""}`}
            >
              {name}
            </button>
          ))}
          <button type="button" className="ml-[5px] h-full w-[66px] border-x border-[#d6dfd9] bg-[#c4dcf6] text-center">Format</button>
          <button type="button" aria-label="Help" className="mb-[5px] ml-auto flex">
            <Svg w={9} h={9}>
              <circle cx="4.5" cy="4.5" r="4" fill="#3d6cc4" stroke="#8fb2e6" />
              <path d="M3 3.5c0-2 3.2-1.8 3 0-.1 1-1.5 1-1.5 2M4.5 6.4v1" stroke="#fff" />
            </Svg>
          </button>
        </nav>
        <button type="button" aria-label="Office menu" className="absolute left-[-4px] top-0 flex h-[32px] w-[32px] items-center justify-center rounded-full border border-[#8f98a8] bg-[radial-gradient(circle_at_50%_30%,#ffffff,#d4dbe6_70%,#b4bfce)]">
          <svg className="h-[21px] w-[21px]" viewBox="0 0 19 19" fill="none" strokeWidth="2" aria-hidden="true">
            <path d="M8.500 5.500V2L1.500 3.300v6.200l3.500.5" stroke="#e0521f" />
            <path d="M10.800 5.500V3.800h5.700v5.400h-5.500V5.500" stroke="#f4b52a" />
            <path d="M8.500 10.500v6L2.800 15.500v-5.200h5.700" stroke="#3d78c9" />
            <path d="M11 11h5.500v5.200H11z" stroke="#6cb33f" />
            <path d="M5 6h4v3.500H5z" fill="#fff" stroke="#e8622c" strokeWidth="1" />
          </svg>
        </button>
      </div>
      <Ribbon />
      <div className="relative flex flex-1 overflow-hidden">
        <Slide />
        <div className="w-[10px] bg-linear-to-b from-[#a9c8ec] via-[#5f86b8] to-[#7ba2d6]" />
        <VerticalScroll />
        <MiniToolbar />
      </div>
      <div className="flex h-[7px] border-t border-[#5d7797] bg-[#dce6f0]">
        <div className="flex w-[35px] border-r border-[#56708f] bg-[#7293c0]">
          <Svg w={6} h={6}><path d="M6 0v6H1z" fill="#33507c" /></Svg>
        </div>
        <div className="flex flex-1 items-center justify-center gap-px">
          <span className="h-[3px] w-px bg-[#5d7797]" />
          <span className="h-[3px] w-px bg-[#5d7797]" />
        </div>
        <div className="flex w-[15px] justify-center bg-[#7293c0]"><Svg w={6} h={6}><path d="M0 0v6h5z" fill="#33507c" /></Svg></div>
        <div className="w-[9px] bg-[#a9c6ef]" />
      </div>
    </div>
  );
}
